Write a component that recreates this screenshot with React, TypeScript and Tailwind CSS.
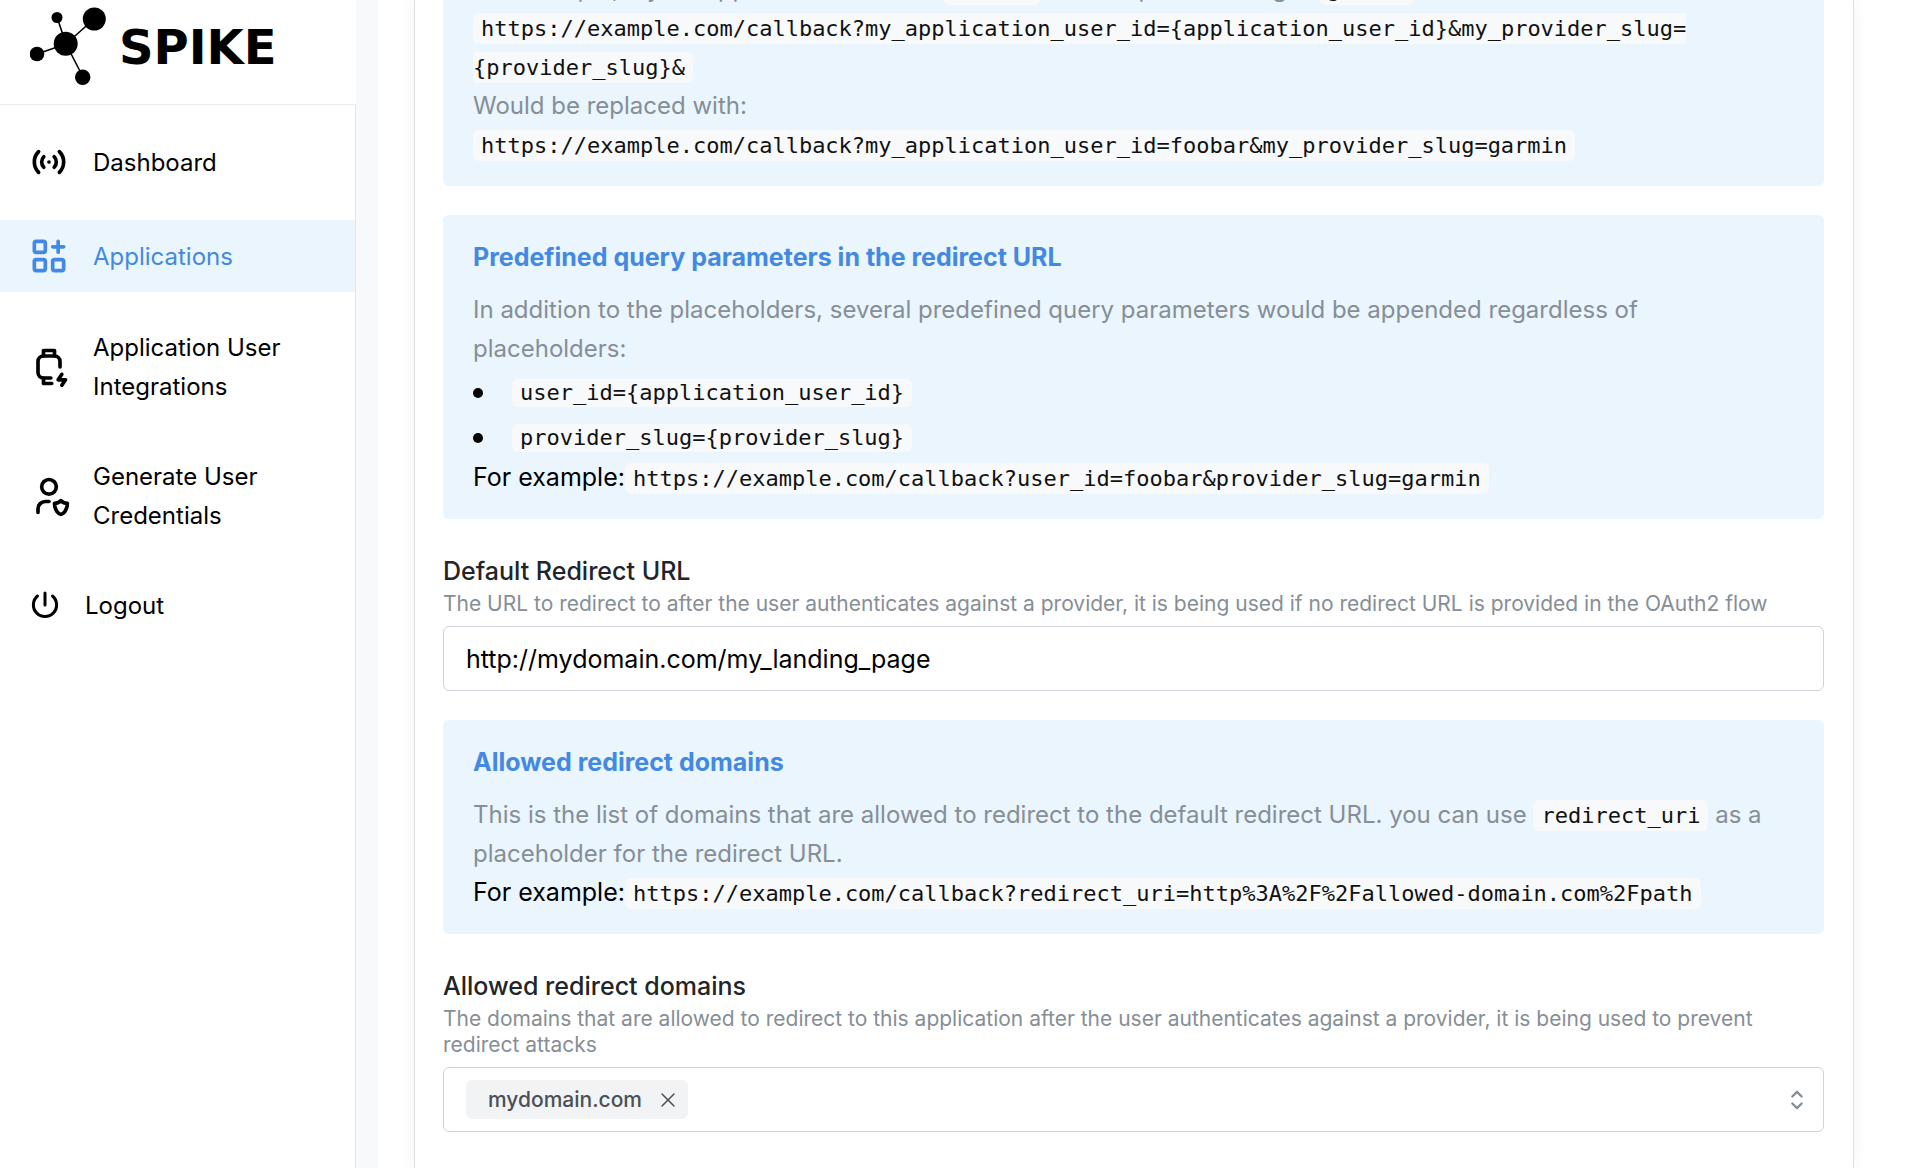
import type { ReactNode } from "react";
import { TbAccessPoint, TbApps, TbDeviceWatchBolt, TbPower, TbSelector, TbUserShield, TbX } from "react-icons/tb";

function Logo() {
  return (
    <a href="#home" aria-label="Spike" className="flex h-[105px] shrink-0 items-center gap-[11px] border-b border-[#e9ecef] pb-[11px] pl-[30px] text-black">
      <svg viewBox="29 8 78 79" className="h-[79px] w-[78px] shrink-0" aria-hidden="true">
        <path d="M65 45 56 18M65 45 93 20M65 45 36 55M65 45 82 78" stroke="currentColor" strokeWidth="1.6" />
        <circle cx="56" cy="18.5" r="5.5" />
        <circle cx="93.3" cy="20" r="11.5" />
        <circle cx="64.7" cy="44.7" r="12" />
        <circle cx="36" cy="55" r="7.3" />
        <circle cx="81.7" cy="78.3" r="7.7" />
      </svg>
      <span className="font-['DejaVu_Sans',sans-serif] text-[48px] leading-none font-bold">SPIKE</span>
    </a>
  );
}

function NavItem({ icon, children, active, className }: { icon: ReactNode; children: ReactNode; active?: boolean; className: string }) {
  return (
    <a href="#nav" aria-current={active ? "page" : undefined} className={`flex items-center gap-[22px] pr-10 pl-[27px] ${className} ${active ? "bg-[#eaf5fe] text-[#4389e3]" : "text-black"}`}>
      <span className="shrink-0">{icon}</span>
      <span>{children}</span>
    </a>
  );
}

function Code({ children }: { children: ReactNode }) {
  return <code className="rounded-md bg-[#f8f9fb] px-2 py-[3px] font-['DejaVu_Sans_Mono',monospace] text-[22px] leading-none text-[#111]">{children}</code>;
}

function InfoBox({ title, children }: { title: string; children: ReactNode }) {
  return (
    <section className="rounded-md bg-[#eaf5fe] px-[30px] pt-[23px] pb-[22px]">
      <h2 className="mb-[13px] text-[25px] font-bold text-[#4389e3]">{title}</h2>
      {children}
    </section>
  );
}

export default function App() {
  return (
    <div className="flex h-screen overflow-hidden bg-white font-['Inter',sans-serif] text-[24px] leading-[39px] text-black">
      <aside className="flex w-[356px] shrink-0 flex-col">
        <Logo />
        <nav className="flex grow flex-col gap-[22px] border-r border-[#e3e6ea] pt-[21px]">
          <NavItem icon={<TbAccessPoint size={44} />} className="h-[72px]">Dashboard</NavItem>
          <NavItem icon={<TbApps size={44} />} className="h-[72px]" active>Applications</NavItem>
          <NavItem icon={<TbDeviceWatchBolt size={44} />} className="py-[14px]">Application User Integrations</NavItem>
          <NavItem icon={<TbUserShield size={44} />} className="py-[15px]">Generate User Credentials</NavItem>
          <NavItem icon={<TbPower size={36} />} className="h-[66px]">Logout</NavItem>
        </nav>
      </aside>
      <main className="flex grow bg-white">
        <div className="w-[22px] shrink-0 bg-[#f8f9fb]" />
        <div className="mr-[76px] ml-9 min-w-0 grow border-x border-[#dee2e6] pr-[29px] pl-7 shadow-[0_0_16px_rgba(0,0,0,0.05)]">
          <div className="-mt-[31px] flex flex-col">
            <section className="rounded-md bg-[#eaf5fe] px-[30px] pb-[22px] text-[#868e96]">
              <p>For example, if your application user id is <Code>foobar</Code> and the provider slug is <Code>garmin</Code></p>
              <p><Code>https://example.com/callback?my_application_user_id={"{application_user_id}"}&amp;my_provider_slug=<wbr />{"{provider_slug}"}&amp;</Code></p>
              <p>Would be replaced with:</p>
              <p><Code>https://example.com/callback?my_application_user_id=foobar&amp;my_provider_slug=garmin</Code></p>
            </section>

            <div className="mt-[29px]">
              <InfoBox title="Predefined query parameters in the redirect URL">
                <p className="text-[#868e96]">In addition to the placeholders, several predefined query parameters would be appended regardless of placeholders:</p>
                <ul>
                  {["user_id={application_user_id}", "provider_slug={provider_slug}"].map((item) => (
                    <li key={item} className="flex h-[45px] items-center gap-[29px] pt-1">
                      <span className="size-[10px] rounded-full bg-black" />
                      <Code>{item}</Code>
                    </li>
                  ))}
                </ul>
                <p className="text-[25px]">For example:<Code>https://example.com/callback?user_id=foobar&amp;provider_slug=garmin</Code></p>
              </InfoBox>
            </div>

            <div className="mt-[33px] flex flex-col">
              <label htmlFor="redirect" className="text-[25px] font-medium text-[#212529]">Default Redirect URL</label>
              <p id="redirect-help" className="mb-[9px] text-[21px] leading-[26px] text-[#868e96]">The URL to redirect to after the user authenticates against a provider, it is being used if no redirect URL is provided in the OAuth2 flow</p>
              <input id="redirect" aria-describedby="redirect-help" defaultValue="http://mydomain.com/my_landing_page" className="h-[65px] w-full rounded-md border border-[#ced4da] bg-white px-[22px] text-[25px]" />
            </div>

            <div className="mt-[29px]">
              <InfoBox title="Allowed redirect domains">
                <p className="text-[#868e96]">This is the list of domains that are allowed to redirect to the default redirect URL. you can use <Code>redirect_uri</Code> as a placeholder for the redirect URL.</p>
                <p className="text-[25px]">For example:<Code>https://example.com/callback?redirect_uri=http%3A%2F%2Fallowed-domain.com%2Fpath</Code></p>
              </InfoBox>
            </div>

            <div className="mt-[33px] flex flex-col">
              <label htmlFor="domains" className="text-[25px] font-medium text-[#212529]">Allowed redirect domains</label>
              <p id="domains-help" className="mb-[9px] text-[21px] leading-[26px] text-[#868e96]">The domains that are allowed to redirect to this application after the user authenticates against a provider, it is being used to prevent redirect attacks</p>
              <div className="flex h-[65px] items-center rounded-md border border-[#ced4da] bg-white pr-3 pl-[22px]">
                <span className="flex h-[39px] items-center gap-[14px] rounded-md bg-[#f1f3f5] pr-2 pl-[22px] text-[21px] font-medium text-[#495057]">
                  mydomain.com
                  <button type="button" aria-label="Remove mydomain.com"><TbX size={24} strokeWidth={1.5} /></button>
                </span>
                <input id="domains" aria-describedby="domains-help" className="min-w-0 grow bg-transparent px-3 outline-none" />
                <TbSelector size={28} className="text-[#868e96]" />
              </div>
            </div>
          </div>
        </div>
      </main>
    </div>
  );
}
